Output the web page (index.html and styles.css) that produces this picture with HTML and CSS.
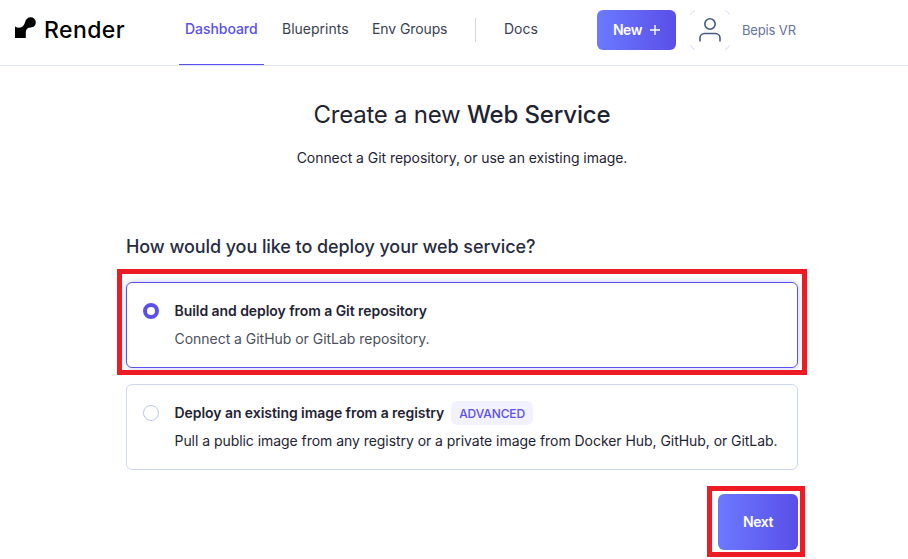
FILE: index.html
```html
<!DOCTYPE html>
<html lang="en">
<head>
<meta charset="utf-8">
<title>Create a new Web Service</title>
<link rel="stylesheet" href="styles.css">
</head>
<body>
<header class="topbar">
  <a class="brand">
    <svg class="brand-mark" width="21" height="21" viewBox="0 0 21 21"><path d="M0 9.600c.9.700 2 1.100 3.300 1.100 3.400 0 5.700-1.700 6.700-5.200C10.700 2.200 12.700.2 15.700.2a5.100 5.100 0 0 1 5.100 5.100c0 3.300-2 5.200-5.100 5.200-2.900 0-4.900 1.700-4.900 4.700V21H0z"/></svg>
    <span class="brand-name">Render</span>
  </a>
  <nav class="nav">
    <a class="nav-item active"><span>Dashboard</span></a>
    <a class="nav-item"><span>Blueprints</span></a>
    <a class="nav-item"><span class="t-env">Env Groups</span></a>
    <span class="divider"></span>
    <a class="nav-item"><span>Docs</span></a>
  </nav>
  <div class="account">
    <button class="btn new"><span>New</span><svg width="10" height="10" viewBox="0 0 10 10"><path d="M5 0v10M0 5h10" stroke="currentColor" stroke-width="1.400"/></svg></button>
    <svg class="avatar" width="40" height="40" viewBox="0 0 40 40" fill="none"><path d="M.5 5Q1.500 1.500 5 .5M35 .5Q38.500 1.500 39.500 5M39.500 35Q38.500 38.500 35 39.500M5 39.500Q1.500 38.500.5 35" stroke="#d9dcfb"/><g stroke="#475a80" stroke-width="1.600"><circle cx="20" cy="14" r="5.200"/><path d="M10 31.500V28a4.500 4.500 0 0 1 4.500-4.500h11A4.500 4.500 0 0 1 30 28v3.500"/></g></svg>
    <span class="user">Bepis VR</span>
  </div>
</header>
<main class="content">
  <h1>Create a new <strong>Web Service</strong></h1>
  <p class="lead">Connect a Git repository, or use an existing image.</p>
  <h2>How would you like to deploy your web service?</h2>
  <div class="option selected">
    <span class="radio"></span>
    <div class="option-text">
      <div class="option-title"><span>Build and deploy from a Git repository</span></div>
      <div class="option-desc">Connect a GitHub or GitLab repository.</div>
    </div>
  </div>
  <div class="option">
    <span class="radio"></span>
    <div class="option-text">
      <div class="option-title"><span>Deploy an existing image from a registry</span><span class="badge">ADVANCED</span></div>
      <div class="option-desc dark">Pull a public image from any registry or a private image from Docker Hub, GitHub, or GitLab.</div>
    </div>
  </div>
  <div class="actions"><button class="btn next">Next</button></div>
</main>
</body>
</html>
```
FILE: styles.css
```css
* { box-sizing: border-box; }
body { margin: 0; height: 559px; overflow: hidden; background: #fff; color: #1f2433; font: 14px/20px Inter, "Liberation Sans", sans-serif; white-space: nowrap; }
.topbar { display: flex; height: 66px; border-bottom: 1px solid #dfe3f5; }
.brand { display: flex; width: 179px; padding: 17px 0 0 15px; color: #000; }
.brand-name { margin-left: 8px; font-size: 23px; line-height: 26px; font-weight: 500; letter-spacing: .4px; }
.nav { display: flex; width: 418px; }
.nav-item { padding: 19px 0 0 6px; color: #3b3e50; height: 65px; }
.nav-item:nth-child(2) { width: 90px; }
.nav-item:nth-child(3) { width: 109px; }
.nav-item.active { width: 85px; margin-right: 12px; color: #5a50eb; border-bottom: 1px solid #5a50eb; font-weight: 500; letter-spacing: -.05px; }
.t-env { letter-spacing: -.1px; }
.divider { width: 1px; height: 24px; margin: 18px 22px 0 0; background: #cdd8e8; }
.account { display: flex; align-items: center; height: 40px; margin-top: 10px; }
.btn { border: 0; border-radius: 6px; padding: 0; color: #fff; font: 600 14px/20px Inter, "Liberation Sans", sans-serif; letter-spacing: -.4px; background: linear-gradient(90deg, #6b7aff, #5a4ee8); }
.new { display: flex; align-items: center; justify-content: center; gap: 8px; width: 79px; height: 40px; }
.avatar { margin-left: 14px; }
.user { margin-left: 12px; color: #66739c; font-size: 13px; letter-spacing: -.15px; }
.content { width: 672px; margin-left: 126px; }
h1 { margin: 0; padding-top: 33px; font-size: 24px; line-height: 32px; font-weight: 400; text-align: center; letter-spacing: -.25px; }
h1 strong { font-weight: 500; letter-spacing: -.15px; }
.lead { margin: 17px 0 0; text-align: center; letter-spacing: -.05px; }
h2 { margin: 67px 0 0; font-size: 18px; line-height: 24px; font-weight: 500; color: #282c3f; letter-spacing: -.08px; }
.option { position: relative; display: flex; height: 86px; margin-top: 16px; padding: 18px 16px; border: 1px solid #cfd9ee; border-radius: 6px; }
.option.selected { margin-top: 23px; border-color: #5a50eb; box-shadow: 0 0 6px #c4c6fb; }
.selected::after { content: ""; position: absolute; inset: -14px -10px -8px; border: 5px solid #ed1c24; }
.radio { flex: none; width: 16px; height: 16px; margin-top: 2px; border: 1px solid #bcc9e6; border-radius: 50%; }
.selected .radio { border: 4px solid #5a50eb; }
.option-text { margin-left: 15.500px; }
.option-title { display: flex; height: 20px; font-weight: 600; letter-spacing: -.06px; }
.option-desc { margin-top: 8px; color: #4c4f5d; letter-spacing: -.03px; }
.option-desc.dark { color: #1f2433; letter-spacing: -.05px; }
.badge { height: 24px; margin: -2px 0 0 7px; padding: 2px 8px; width: 82px; border-radius: 6px; background: #f2f1fe; color: #5a50eb; font-size: 12px; line-height: 21px; font-weight: 500; letter-spacing: -.1px; }
.actions { display: flex; justify-content: flex-end; margin-top: 24px; }
.next { position: relative; width: 80px; height: 56px; }
.next::after { content: ""; position: absolute; inset: -8px -7px -7px -11px; border: 5px solid #ed1c24; }
```
